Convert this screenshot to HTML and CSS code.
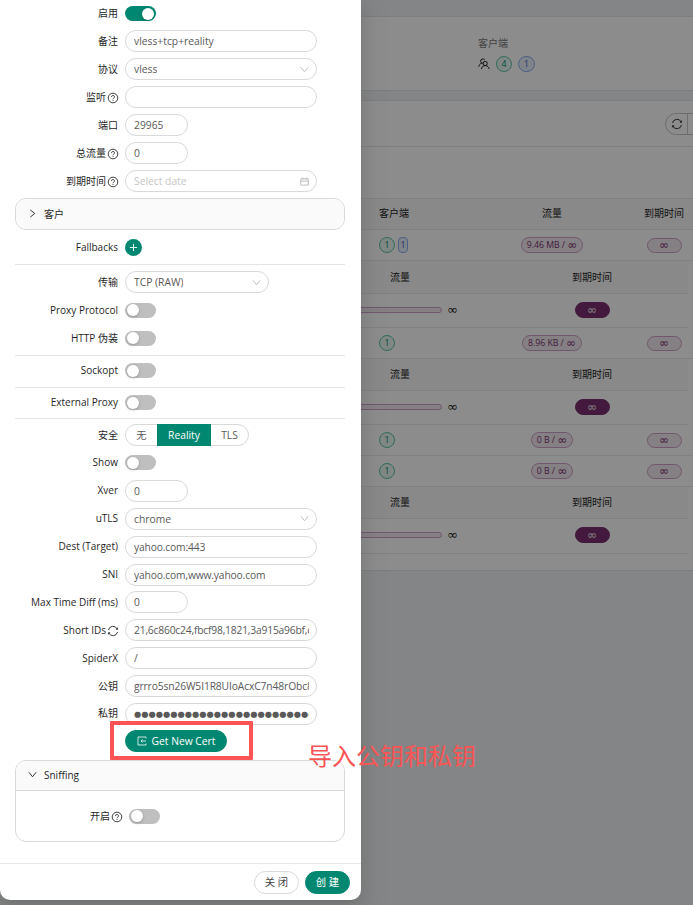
FILE: index.html
```html
<!DOCTYPE html>
<html lang="zh-CN">
<head>
<meta charset="utf-8">
<title>Inbounds</title>
<link rel="stylesheet" href="styles.css">
</head>
<body>
<svg class="defs" width="0" height="0">
  <symbol id="down" viewBox="0 0 10 10"><path d="M1 2.500 5 7.500 9 2.500"/></symbol>
  <symbol id="help" viewBox="0 0 12 12"><circle cx="6" cy="6" r="4.800"/><path d="M4.500 4.900a1.500 1.400 0 1 1 2.200 1.200Q6 6.500 6 7.200M6 8.100v.9"/></symbol>
  <symbol id="sync" viewBox="0 0 12 12"><path d="M1.500 5A4.600 4.600 0 0 1 10.200 4M10.500 7A4.600 4.600 0 0 1 1.800 8M10.600 2.600v1.700H8.900M1.400 9.400V7.700h1.700"/></symbol>
  <symbol id="cal" viewBox="0 0 10 10"><path d="M.8 2h8.400v7H.8zM.8 4.600h8.400M3 .7v2.400M7 .7v2.400"/></symbol>
</svg>
<main class="page">
  <section class="card stats">
    <div class="title">客户端</div>
    <div class="nums"><svg class="people" viewBox="0 0 12 12"><circle cx="7.200" cy="5.500" r="2.100"/><path d="M3.500 11c.2-2 1.600-3.400 3.700-3.400S10.900 9 11.200 11M5.100 5.300A2.200 2.200 0 1 1 6.800 2.100M.8 8.800C1.100 6.800 2.200 5.500 3.800 5.100"/></svg><span class="tag green">4</span><span class="tag blue wide">1</span></div>
  </section>
  <section class="card list">
    <div class="toolbar"><div class="tool"><svg class="sync"><use href="#sync"/></svg></div><div class="tool next"></div></div>
    <div class="spacer"></div>
    <div class="row head"><span>客户端</span><span class="mid">流量</span><span class="mid">到期时间</span></div>
    <div class="row"><span><b class="tag green">1</b><b class="tag blue slim">1</b></span><span class="mid"><b class="tag purple">9.46 MB / <i>∞</i></b></span><span class="mid"><b class="tag purple inf"><i>∞</i></b></span></div>
    <div class="sub head tall"><span>流量</span><span class="mid">到期时间</span></div>
    <div class="sub"><span class="prog"><b class="bar"></b><i>∞</i></span><span class="mid"><b class="tag solid"><i>∞</i></b></span></div>
    <div class="row"><span><b class="tag green">1</b></span><span class="mid"><b class="tag purple">8.96 KB / <i>∞</i></b></span><span class="mid"><b class="tag purple inf"><i>∞</i></b></span></div>
    <div class="sub head"><span>流量</span><span class="mid">到期时间</span></div>
    <div class="sub"><span class="prog"><b class="bar"></b><i>∞</i></span><span class="mid"><b class="tag solid"><i>∞</i></b></span></div>
    <div class="row"><span><b class="tag green">1</b></span><span class="mid"><b class="tag purple">0 B / <i>∞</i></b></span><span class="mid"><b class="tag purple inf"><i>∞</i></b></span></div>
    <div class="row"><span><b class="tag green">1</b></span><span class="mid"><b class="tag purple">0 B / <i>∞</i></b></span><span class="mid"><b class="tag purple inf"><i>∞</i></b></span></div>
    <div class="sub head"><span>流量</span><span class="mid">到期时间</span></div>
    <div class="sub last"><span class="prog"><b class="bar"></b><i>∞</i></span><span class="mid"><b class="tag solid"><i>∞</i></b></span></div>
  </section>
</main>
<div class="mask"></div>
<div class="modal">
  <div class="body">
    <div class="field first"><label>启用</label><span class="switch on"></span></div>
    <div class="field"><label>备注</label><div class="input"><span>vless+tcp+reality</span></div></div>
    <div class="field"><label>协议</label><div class="input"><span>vless</span><svg><use href="#down"/></svg></div></div>
    <div class="field"><label>监听<svg class="help"><use href="#help"/></svg></label><div class="input"></div></div>
    <div class="field"><label>端口</label><div class="input small"><span>29965</span></div></div>
    <div class="field"><label>总流量<svg class="help"><use href="#help"/></svg></label><div class="input small"><span>0</span></div></div>
    <div class="field"><label>到期时间<svg class="help"><use href="#help"/></svg></label><div class="input hint"><span>Select date</span><svg><use href="#cal"/></svg></div></div>
    <div class="panel clients"><div class="phead"><svg class="right"><use href="#down"/></svg>客户</div></div>
    <div class="field fall"><label>Fallbacks</label><span class="plus"><svg viewBox="0 0 10 10"><path d="M5 1v8M1 5h8"/></svg></span></div>
    <hr>
    <div class="field transport"><label>传输</label><div class="input medium"><span>TCP (RAW)</span><svg><use href="#down"/></svg></div></div>
    <div class="field"><label>Proxy Protocol</label><span class="switch"></span></div>
    <div class="field"><label>HTTP 伪装</label><span class="switch"></span></div>
    <hr class="h2">
    <div class="field sock"><label>Sockopt</label><span class="switch"></span></div>
    <hr>
    <div class="field ext"><label>External Proxy</label><span class="switch"></span></div>
    <hr>
    <div class="field sec"><label>安全</label><div class="radio"><span>无</span><span class="active">Reality</span><span>TLS</span></div></div>
    <div class="reality">
      <div class="field"><label>Show</label><span class="switch"></span></div>
      <div class="field"><label>Xver</label><div class="input small"><span>0</span></div></div>
      <div class="field"><label>uTLS</label><div class="input"><span>chrome</span><svg><use href="#down"/></svg></div></div>
      <div class="field"><label>Dest (Target)</label><div class="input"><span class="host">yahoo.com:443</span></div></div>
      <div class="field"><label>SNI</label><div class="input"><span class="host">yahoo.com,www.yahoo.com</span></div></div>
      <div class="field"><label>Max Time Diff (ms)</label><div class="input small"><span>0</span></div></div>
      <div class="field"><label>Short IDs<svg class="help"><use href="#sync"/></svg></label><div class="input"><span class="ids">21,6c860c24,fbcf98,1821,3a915a96bf,c</span></div></div>
      <div class="field"><label>SpiderX</label><div class="input"><span>/</span></div></div>
      <div class="field"><label>公钥</label><div class="input"><span class="key">grrro5sn26W5I1R8UIoAcxC7n48rObc8</span></div></div>
      <div class="field"><label>私钥</label><div class="input"><span class="dots">●●●●●●●●●●●●●●●●●●●●●●●●●●●●</span></div></div>
    </div>
    <div class="field cert"><label></label><div class="btn primary get"><svg viewBox="0 0 10 10"><path d="M9 2.500V1H1v8h8V7.500M9 5H4M5.500 3.500 4 5l1.500 1.500"/></svg>Get New Cert</div></div>
    <div class="panel sniff"><div class="phead"><svg><use href="#down"/></svg>Sniffing</div><div class="field inner"><label>开启<svg class="help"><use href="#help"/></svg></label><span class="switch"></span></div></div>
  </div>
  <div class="footer"><div class="btn">关 闭</div><div class="btn primary">创 建</div></div>
</div>
<div class="marker"></div>
<div class="note">导入公钥和私钥</div>
</body>
</html>
```
FILE: styles.css
```css
* { box-sizing: border-box; }
body { margin: 0; width: 693px; height: 905px; overflow: hidden; position: relative; background: #f0f2f5; font: 10.3px/16px "Open Sans", "Noto Sans CJK SC", sans-serif; color: #1f1f1f; }
.defs { position: absolute; }
svg { fill: none; stroke: currentColor; }
i { font-style: normal; }
b { font-weight: 400; }

.page { padding-top: 16px; }
.card { background: #fff; border: 1px solid #e4e6ea; border-width: 1px 0; }
.stats { height: 75px; padding: 18px 0 0 478px; margin-bottom: 9px; }
.title { font-size: 10px; color: #777; }
.nums { display: flex; align-items: center; height: 25px; }
.people { width: 12px; height: 12px; margin-right: 6px; }
.list { height: 471px; }
.toolbar { height: 46px; border-bottom: 1px solid #e8e8e8; display: flex; align-items: center; justify-content: flex-end; }
.tool { width: 23px; height: 22px; border: 1px solid #c9c9c9; border-radius: 11px 0 0 11px; display: grid; place-items: center; color: #333; }
.tool.next { width: 6px; border-radius: 0; margin-left: -1px; border-right: 0; }
.sync { width: 12px; height: 12px; }
.spacer { height: 52px; border-bottom: 1px solid #ececec; }
.row { height: 31px; border-bottom: 1px solid #ececec; display: grid; grid-template-columns: 98px 150px 74px; align-items: center; padding-left: 379px; }
.row.head { font-size: 10px; padding-bottom: 2px; }
.sub { height: 34px; padding-bottom: 1px; border-bottom: 1px solid #ececec; margin-right: 5px; display: grid; grid-template-columns: 136px 130px; align-items: center; padding-left: 390px; font-size: 10px; }
.sub.head { height: 32px; }
.sub.tall { height: 33px; }
.sub.last { height: 35px; padding-bottom: 2px; }
.sub .mid { padding-left: 2px; }
.head { background: #fafafa; }
.row > span, .sub > span { display: flex; align-items: center; }
.row > .mid, .sub > .mid { justify-content: center; }
.tag { height: 16px; min-width: 16px; border: 1px solid; border-radius: 9px; display: flex; align-items: center; justify-content: center; font-size: 8.7px; line-height: 14px; padding: 0 4.5px; white-space: pre; margin-right: 3px; }
.mid .tag { margin: 0; }
.green { color: #008771; border-color: #5cc4a6; background: #e9f8f2; }
.blue { color: #3c62c6; border-color: #91b1ee; background: #e8eefc; }
.wide { margin-left: 3px; width: 17px; }
.slim { min-width: 10px; width: 10px; padding: 0; border-radius: 4px; }
.purple { color: #7a316f; border-color: #cfa1c8; background: #f2eaf1; }
.inf { width: 35px; height: 15px; }
.solid { width: 35px; color: #f2eaf1; background: #7a316f; border-color: #7a316f; }
.tag i, .prog i { font-family: "DejaVu Sans", sans-serif; font-size: 12px; }
.prog i { font-size: 13px; }
.prog { margin-left: -90px; }
.bar { width: 142px; height: 6px; border: 1px solid #cfa1c8; border-radius: 3px; background: #f2eaf1; margin-right: 5px; }
.mask { position: absolute; inset: 0; background: rgba(0, 0, 0, .45); }

.modal { position: absolute; left: 0; top: 0; width: 361px; height: 900px; background: #fff; border-radius: 0 0 10px 10px; box-shadow: 0 6px 16px rgba(0, 0, 0, .08), 0 3px 6px -4px rgba(0, 0, 0, .12), 0 9px 28px 8px rgba(0, 0, 0, .05); overflow: hidden; }
.body { height: 863px; padding: 0 16px 0 15px; }
.field { height: 28px; display: flex; align-items: center; }
.first { height: 27px; }
label { width: 103px; margin-right: 7px; padding-bottom: 1px; display: flex; justify-content: flex-end; align-items: center; white-space: nowrap; font-size: 10px; }
.help { width: 12px; height: 12px; margin-left: 1px; margin-right: -1px; flex: none; stroke-width: .85; position: relative; top: 1px; }
.input { width: 192px; height: 22px; border: 1px solid #d9d9d9; border-radius: 11px; padding: 0 7px 0 8px; display: flex; align-items: center; justify-content: space-between; color: #595959; }
.input span { overflow: hidden; white-space: nowrap; line-height: 20px; }
.input svg { width: 9px; height: 9px; color: #b8b8b8; flex: none; }
.small { width: 63px; }
.medium { width: 144px; }
.hint { color: #c5c5c5; }
.host { letter-spacing: -.17px; }
.ids { letter-spacing: -.2px; }
.key { letter-spacing: -.13px; }
.dots { font-family: "DejaVu Sans", sans-serif; font-size: 8.300px; letter-spacing: .02px; }
.switch { width: 31px; height: 15px; border-radius: 8px; background: #bfbfbf; display: flex; align-items: center; padding: 0 2px; }
.switch::before { content: ""; width: 12px; height: 12px; border-radius: 50%; background: #fff; box-shadow: 0 1px 3px rgba(0, 35, 11, .25); }
.on { background: #008771; justify-content: flex-end; }
.panel { width: 330px; border: 1px solid #d9d9d9; border-radius: 11px; overflow: hidden; }
.clients { height: 32px; margin-top: 3px; }
.phead { height: 30px; background: #fafafa; display: flex; align-items: center; padding: 0 0 1px 12px; font-size: 10px; }
.phead svg { width: 9px; height: 9px; margin-right: 7px; }
.right { transform: rotate(-90deg); }
.fall { height: 34px; }
.plus { width: 17px; height: 17px; border-radius: 50%; background: #008771; color: #fff; display: grid; place-items: center; }
.plus svg { width: 9px; height: 9px; }
hr { margin: 0; border: 0; height: 1px; background: #e5e5e5; }
.transport { height: 31px; padding-top: 3px; }
.h2 { margin-top: 3px; }
.sock { height: 31px; padding-bottom: 2px; }
.ext { height: 30px; padding-bottom: 1px; }
.sec { height: 30px; padding-top: 2px; }
.reality .field { height: 27.9px; }
.radio { display: flex; height: 22px; border: 1px solid #d9d9d9; border-radius: 11px; color: #595959; line-height: 20px; text-align: center; }
.radio span { width: 31px; }
.radio .active { width: 54px; background: #008771; color: #fff; margin: -1px 0; line-height: 22px; }
.radio span:last-child { width: 37px; }
.cert { height: 26px; }
.btn { height: 23px; width: 45px; border: 1px solid #d9d9d9; border-radius: 12px; display: flex; align-items: center; justify-content: center; color: #444; }
.primary { background: #008771; border-color: #008771; color: #fff; }
.get { width: 102px; height: 22px; }
.get svg { width: 10px; height: 10px; margin-right: 5px; stroke-width: .8; }
.sniff { height: 82px; margin-top: 6px; }
.sniff .phead { border-bottom: 1px solid #d9d9d9; }
.inner { height: 51px; padding-left: 3px; }
.footer { height: 37px; border-top: 1px solid #e8e8e8; display: flex; align-items: center; justify-content: flex-end; gap: 6px; padding-right: 11px; }
.footer .btn { padding-bottom: 1px; }
.marker { position: absolute; left: 110px; top: 721px; width: 143px; height: 39px; border: 4px solid #fc5454; border-radius: 1px; }
.note { position: absolute; left: 308px; top: 737px; font: 24px/36px "Noto Sans CJK SC", sans-serif; color: #fc5454; white-space: nowrap; }
```
